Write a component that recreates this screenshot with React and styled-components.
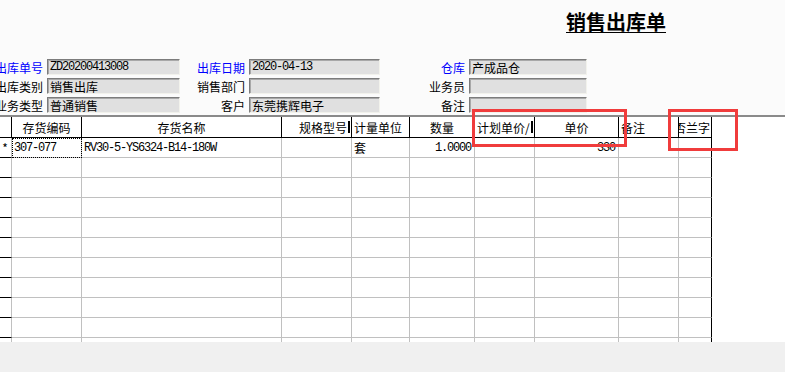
import React from 'react';
import styled, { createGlobalStyle, css } from 'styled-components';

const GlobalStyle = createGlobalStyle`
  html, body {
    margin: 0;
    padding: 0;
    background: #fbfbfb;
    font-family: "Noto Sans CJK SC", "Liberation Sans", sans-serif;
    font-size: 12px;
    color: #000;
  }
`;

const fields = [
  [
    { label: '出库单号', value: 'ZD20200413008', blue: true, mono: true },
    { label: '出库日期', value: '2020-04-13', blue: true, mono: true },
    { label: '仓库', value: '产成品仓', blue: true },
  ],
  [
    { label: '出库类别', value: '销售出库' },
    { label: '销售部门', value: '' },
    { label: '业务员', value: '' },
  ],
  [
    { label: '业务类型', value: '普通销售' },
    { label: '客户', value: '东莞携辉电子' },
    { label: '备注', value: '' },
  ],
];

// widths include the right border line of each column
const columns = [
  { title: '', w: 12 },
  { title: '存货编码', w: 70 },
  { title: '存货名称', w: 200 },
  { title: '规格型号', w: 70, align: 'right', bar: true },
  { title: '计量单位', w: 58, align: 'left' },
  { title: '数量', w: 65 },
  { title: '计划单价/', w: 60, align: 'left', bar: true },
  { title: '单价', w: 84 },
  { title: '备注', w: 60, align: 'left' },
  { title: '否兰字', w: 33, align: 'right', last: true },
];

const firstRow = [
  { text: '*', align: 'center' },
  { text: '307-077', mono: true, focus: true },
  { text: 'RV30-5-YS6324-B14-180W', mono: true },
  { text: '' },
  { text: '套' },
  { text: '1.0000', mono: true, align: 'right' },
  { text: '' },
  { text: '330', mono: true, align: 'right' },
  { text: '' },
  { text: '' },
];

const EMPTY_ROWS = 10;

export default function App() {
  const template = columns.map((c) => `${c.w}px`).join(' ');

  return (
    <Page>
      <GlobalStyle />
      <TitleBar>
        <Title>销售出库单</Title>
      </TitleBar>

      <Form>
        {fields.map((row) =>
          row.map((f) => (
            <React.Fragment key={f.label}>
              <Label $blue={f.blue}>{f.label}</Label>
              <Input $mono={f.mono}>{f.value}</Input>
            </React.Fragment>
          ))
        )}
      </Form>

      <TableSection>
        <Grid style={{ gridTemplateColumns: template }}>
          {columns.map((c, i) => (
            <HeadCell key={i} $align={c.align} $bar={c.bar}>
              {c.title}
            </HeadCell>
          ))}
          {firstRow.map((cell, i) => (
            <BodyCell
              key={`r0-${i}`}
              $rowHead={i === 0}
              $last={columns[i].last}
              $align={cell.align}
              $mono={cell.mono}
              $focus={cell.focus}
            >
              {cell.text}
            </BodyCell>
          ))}
          {Array.from({ length: EMPTY_ROWS }).map((_, r) =>
            columns.map((c, i) => (
              <BodyCell key={`r${r + 1}-${i}`} $rowHead={i === 0} $last={c.last} />
            ))
          )}
        </Grid>
      </TableSection>

      <Footer />

      <Mark $left={472} $top={109} $w={155} $h={38} />
      <Mark $left={668} $top={109} $w={70} $h={42} />
    </Page>
  );
}

const Page = styled.div`
  position: relative;
  width: 785px;
  height: 372px;
  overflow: hidden;
  display: flex;
  flex-direction: column;
`;

const TitleBar = styled.div`
  height: 59px;
  padding-left: 566px;
  box-sizing: border-box;
`;

const Title = styled.div`
  display: inline-block;
  margin-top: 12px;
  font-size: 20px;
  font-weight: 700;
  line-height: 20px;
  border-bottom: 1px solid #000;
`;

const Form = styled.div`
  display: grid;
  grid-template-columns: 47px 133px 69px 131px 89px 118px;
  grid-auto-rows: 16px;
  row-gap: 3px;
  margin-bottom: 2px;
`;

const Label = styled.div`
  display: flex;
  align-items: center;
  justify-content: flex-end;
  padding-right: 4px;
  white-space: nowrap;
  font-size: 12px;
  color: ${(p) => (p.$blue ? '#0000ff' : '#000')};
`;

const monoText = css`
  font-family: "Liberation Mono", monospace;
  font-size: 12px;
  letter-spacing: -1.2px;
`;

const Input = styled.div`
  box-sizing: border-box;
  height: 16px;
  background: #e0e0e0;
  border: 1px solid;
  border-color: #7c7c7c #f2f2ec #f2f2ec #7c7c7c;
  box-shadow: inset 1px 1px 0 #a8a8a8;
  padding-left: 2px;
  display: flex;
  align-items: center;
  white-space: nowrap;
  overflow: hidden;
  font-size: 12px;
  ${(p) => p.$mono && monoText}
`;

const TableSection = styled.div`
  height: 227px;
  box-sizing: border-box;
  border-top: 2px solid #8a8a8a;
  background: #fff;
  overflow: hidden;
`;

const Grid = styled.div`
  display: grid;
  grid-auto-rows: 20px;
  grid-template-rows: 21px;
  width: 712px;
`;

const alignMap = { left: 'flex-start', right: 'flex-end', center: 'center' };

const HeadCell = styled.div`
  box-sizing: border-box;
  border-right: 1px solid #000;
  border-bottom: 1px solid #000;
  display: flex;
  align-items: center;
  justify-content: ${(p) => alignMap[p.$align || 'center']};
  padding: 0 ${(p) => (p.$align === 'right' ? '1px' : '2px')} 0 2px;
  white-space: nowrap;
  overflow: hidden;
  font-size: 12px;
  ${(p) =>
    p.$bar &&
    css`
      &::after {
        content: '';
        flex: none;
        width: 2px;
        height: 12px;
        margin-left: 1px;
        background: #000;
      }
    `}
`;

const BodyCell = styled.div`
  box-sizing: border-box;
  border-right: 1px solid ${(p) => (p.$last ? '#000' : '#c0c0c0')};
  border-bottom: 1px solid ${(p) => (p.$rowHead ? '#000' : '#c0c0c0')};
  display: flex;
  align-items: center;
  justify-content: ${(p) => alignMap[p.$align || 'left']};
  padding: 0 3px 0 2px;
  white-space: nowrap;
  overflow: hidden;
  font-size: 12px;
  ${(p) => p.$mono && monoText}
  ${(p) =>
    p.$focus &&
    css`
      outline: 1px dotted #000;
      outline-offset: -1px;
    `}
`;

const Footer = styled.div`
  flex: 1;
  background: #f0f0f0;
`;

const Mark = styled.div`
  position: absolute;
  left: ${(p) => p.$left}px;
  top: ${(p) => p.$top}px;
  width: ${(p) => p.$w}px;
  height: ${(p) => p.$h}px;
  box-sizing: border-box;
  border: 3px solid #f03c3c;
  pointer-events: none;
`;
